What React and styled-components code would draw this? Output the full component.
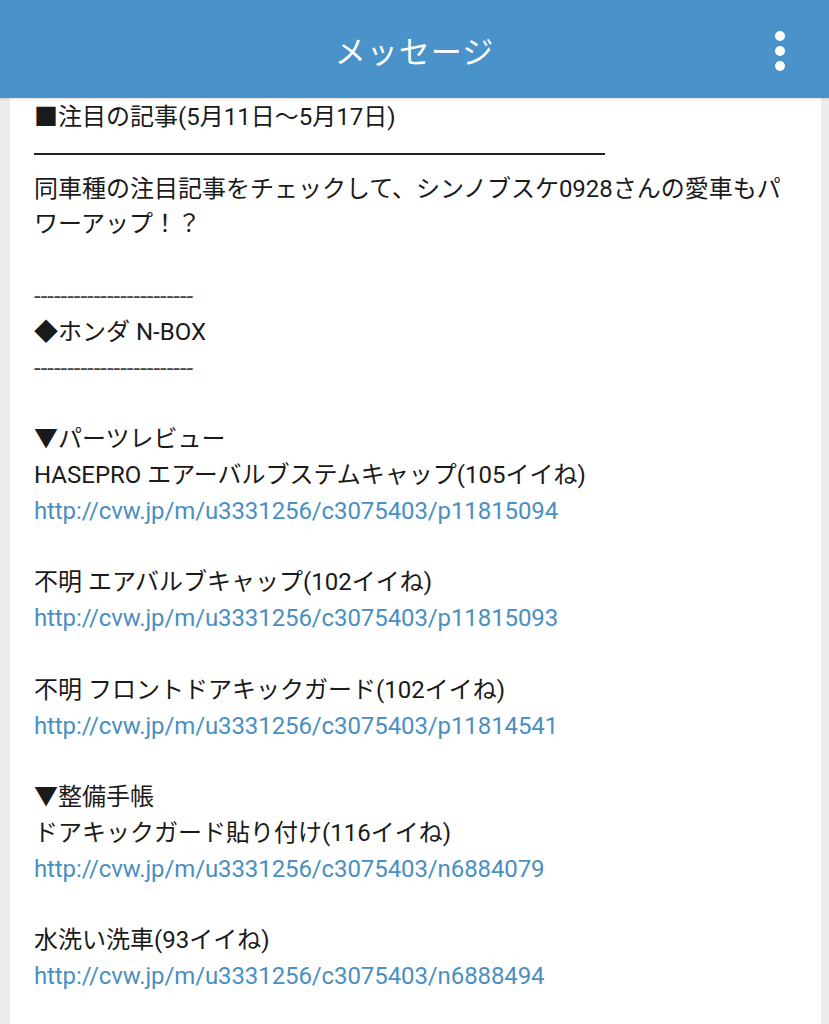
import React from "react";
import styled, { createGlobalStyle } from "styled-components";

const Global = createGlobalStyle`
  html, body { margin: 0; padding: 0; background: #ececec; }
  body { font-family: Roboto, "Noto Sans CJK JP", sans-serif; }
`;

const Page = styled.div`
  width: 829px;
  height: 1024px;
  overflow: hidden;
  background: #ececec;
  display: flex;
  flex-direction: column;
`;

const Header = styled.header`
  height: 98px;
  flex: none;
  background: #4a92ca;
  display: flex;
  align-items: center;
  justify-content: center;
  position: relative;
  box-shadow: 0 1px 2px rgba(0, 0, 0, 0.15);
  z-index: 1;
`;

const Title = styled.h1`
  margin: 0;
  font-family: Roboto, "Noto Sans CJK JP", sans-serif;
  font-weight: 400;
  font-size: 31px;
  color: #fff;
  letter-spacing: 1px;
`;

const Menu = styled.div`
  position: absolute;
  right: 44px;
  top: 31px;
  display: flex;
  flex-direction: column;
  gap: 5px;
`;

const Dot = styled.span`
  width: 10px;
  height: 10px;
  border-radius: 50%;
  background: #fff;
`;

const Card = styled.main`
  flex: 1;
  margin: 0 8px 0 10px;
  background: #fff;
  padding: 2px 24px 0 24px;
  font-family: Roboto, "Noto Sans CJK JP", sans-serif;
  font-size: 24px;
  line-height: 35.8px;
  color: #1a1a1a;
`;

const Line = styled.div`
  min-height: 35.8px;
  white-space: pre-wrap;
`;

const Rule = styled.div`
  height: 35.8px;
  display: flex;
  align-items: center;
  &::before {
    content: "";
    width: 571px;
    height: 2px;
    background: #222;
  }
`;

const Dashes = styled.div`
  height: 35.8px;
  color: #444;
`;

const Link = styled.a`
  display: block;
  color: #4a8fc2;
  text-decoration: none;
  line-height: 35.8px;
  letter-spacing: -0.1px;
`;

const items = [
  { type: "text", v: "■注目の記事(5月11日～5月17日)" },
  { type: "rule" },
  { type: "text", v: "同車種の注目記事をチェックして、シンノブスケ0928さんの愛車もパワーアップ！？" },
  { type: "blank" },
  { type: "dash" },
  { type: "text", v: "◆ホンダ N-BOX" },
  { type: "dash" },
  { type: "blank" },
  { type: "text", v: "▼パーツレビュー" },
  { type: "text", v: "HASEPRO エアーバルブステムキャップ(105イイね)" },
  { type: "link", v: "http://cvw.jp/m/u3331256/c3075403/p11815094" },
  { type: "blank" },
  { type: "text", v: "不明 エアバルブキャップ(102イイね)" },
  { type: "link", v: "http://cvw.jp/m/u3331256/c3075403/p11815093" },
  { type: "blank" },
  { type: "text", v: "不明 フロントドアキックガード(102イイね)" },
  { type: "link", v: "http://cvw.jp/m/u3331256/c3075403/p11814541" },
  { type: "blank" },
  { type: "text", v: "▼整備手帳" },
  { type: "text", v: "ドアキックガード貼り付け(116イイね)" },
  { type: "link", v: "http://cvw.jp/m/u3331256/c3075403/n6884079" },
  { type: "blank" },
  { type: "text", v: "水洗い洗車(93イイね)" },
  { type: "link", v: "http://cvw.jp/m/u3331256/c3075403/n6888494" },
  { type: "blank" },
];

export default function App() {
  return (
    <Page>
      <Global />
      <Header>
        <Title>メッセージ</Title>
        <Menu>
          <Dot />
          <Dot />
          <Dot />
        </Menu>
      </Header>
      <Card>
        {items.map((it, i) => {
          if (it.type === "rule") return <Rule key={i} />;
          if (it.type === "dash") return <Dashes key={i}>------------------------</Dashes>;
          if (it.type === "link") return <Link key={i} href="#">{it.v}</Link>;
          if (it.type === "blank") return <Line key={i} />;
          return <Line key={i}>{it.v}</Line>;
        })}
      </Card>
    </Page>
  );
}
